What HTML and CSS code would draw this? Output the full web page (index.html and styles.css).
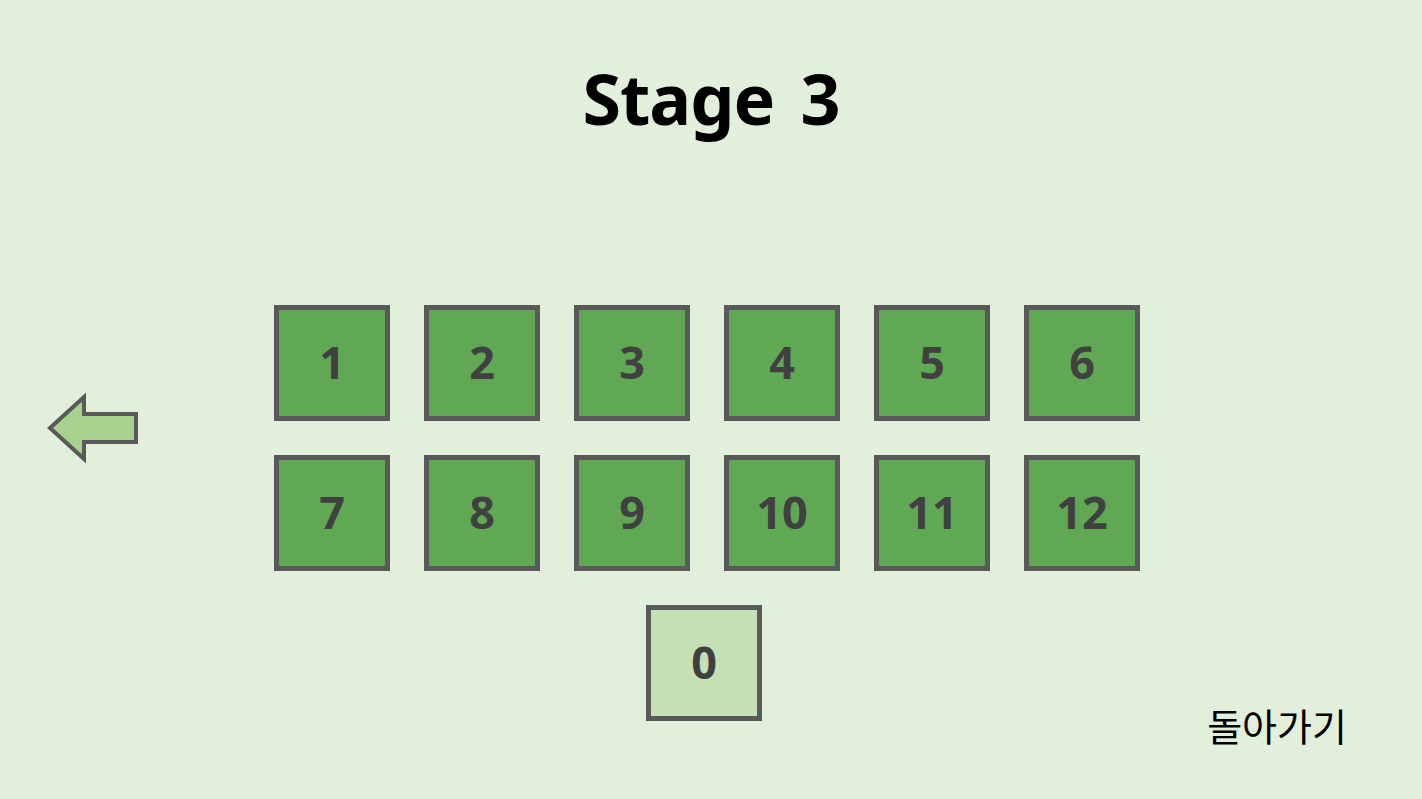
FILE: index.html
```html
<!DOCTYPE html>
<html lang="ko">
<head>
    <meta charset="UTF-8">
    <meta name="viewport" content="width=device-width, initial-scale=1.0">
    <title>Stage 3</title>
    <link rel="stylesheet" href="styles.css">
</head>
<body>
    <div class="page">
        <h1 class="title">Stage 3</h1>

        <!-- previous stage -->
        <div class="side">
            <svg class="back-arrow" width="96" height="74" viewBox="0 0 96 74">
                <polygon points="5,37 39,6 39,23 91,23 91,51 39,51 39,68" fill="#a9d18e" stroke="#595959" stroke-width="4" stroke-linejoin="miter"/>
            </svg>
        </div>

        <!-- level tiles -->
        <div class="tiles">
            <div class="tile">1</div>
            <div class="tile">2</div>
            <div class="tile">3</div>
            <div class="tile">4</div>
            <div class="tile">5</div>
            <div class="tile">6</div>
            <div class="tile">7</div>
            <div class="tile">8</div>
            <div class="tile">9</div>
            <div class="tile">10</div>
            <div class="tile">11</div>
            <div class="tile">12</div>
            <div class="tile tile-zero">0</div>
        </div>

        <div class="back-link">돌아가기</div>
    </div>
</body>
</html>
```

FILE: styles.css
```css
body {
    margin: 0;
    background-color: #e2efda;
    font-family: "Noto Sans", "Noto Sans CJK KR", sans-serif;
}

.page {
    display: grid;
    grid-template-columns: 274px 866px 1fr;
    grid-template-rows: 305px 416px 1fr;
    height: 799px;
    overflow: hidden;
}

.title {
    grid-column: 1 / -1;
    grid-row: 1;
    margin: 0;
    padding-top: 63px;
    text-align: center;
    font-size: 70px;
    line-height: 1;
    font-weight: 700;
    letter-spacing: -1px;
    word-spacing: 9px;
    color: #000;
}

.side {
    grid-column: 1;
    grid-row: 2;
}

.back-arrow {
    display: block;
    margin-left: 45px;
    margin-top: 86px;
}

.tiles {
    grid-column: 2;
    grid-row: 2;
    display: grid;
    grid-template-columns: repeat(6, 116px);
    grid-auto-rows: 116px;
    column-gap: 34px;
    row-gap: 34px;
}

.tile {
    box-sizing: border-box;
    background-color: #61a855;
    border: 5px solid #595959;
    display: flex;
    align-items: center;
    justify-content: center;
    padding-bottom: 3px;
    font-size: 45px;
    line-height: 1;
    font-weight: 700;
    color: #404040;
}

.tile-zero {
    grid-column: 1 / -1;
    justify-self: center;
    width: 116px;
    margin-right: 6px;
    background-color: #c5e0b4;
}

.back-link {
    grid-column: 3;
    grid-row: 2 / 4;
    align-self: start;
    justify-self: end;
    margin-top: 401px;
    margin-right: 75px;
    font-family: "Noto Sans CJK KR", sans-serif;
    font-size: 38px;
    line-height: 1;
    color: #000;
}
```
